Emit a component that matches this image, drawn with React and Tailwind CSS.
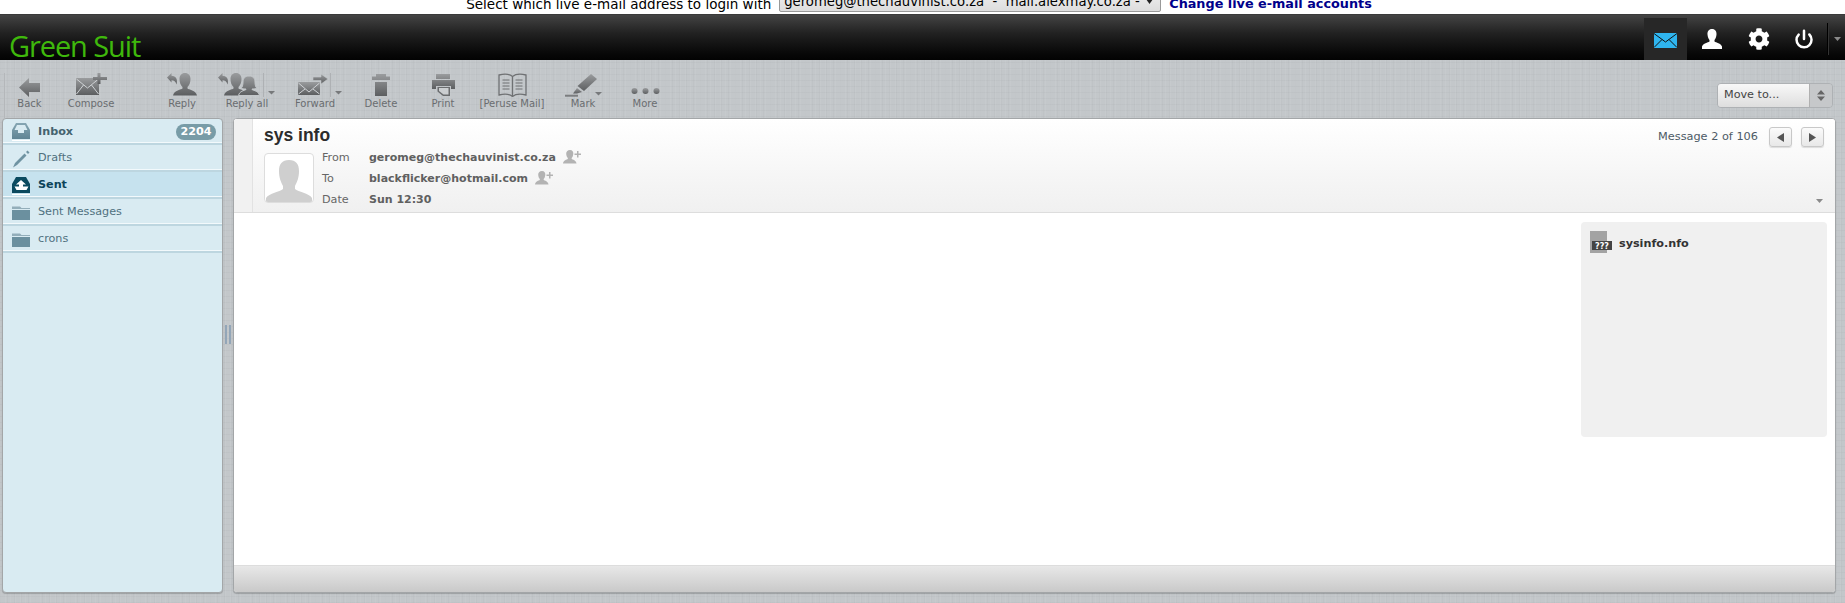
import { FaCog } from "react-icons/fa";
import { Power } from "lucide-react";

const linen =
  "bg-[#c3c7ca] bg-[image:repeating-linear-gradient(90deg,rgba(255,255,255,.05)_0_1px,transparent_1px_5px),repeating-linear-gradient(90deg,rgba(0,0,0,.018)_0_1px,transparent_1px_7px),repeating-linear-gradient(0deg,rgba(0,0,0,.022)_0_1px,transparent_1px_6px)]";

// toolbar icons share a grey top-to-bottom gradient
const Tb = ({ id, w, h = 24, className = "", children }) => (
  <svg width={w} height={h} viewBox={`0 0 ${w} ${h}`} className={className}>
    <defs>
      <linearGradient id={id} x1="0" y1="0" x2="0" y2="1">
        <stop offset="0" stopColor="#9a9c9e" />
        <stop offset="1" stopColor="#5c5e60" />
      </linearGradient>
    </defs>
    <g fill={`url(#${id})`}>{children}</g>
  </svg>
);

const Caret = ({ x, y }) => <path d={`M${x} ${y}h7l-3.500 3.500z`} fill="#77797b" />;

const bust = (cx) =>
  `M${cx} 0c3.400 0 5.500 2.500 5.500 6 0 3.500-1.200 6.500-3 8v1.500c1 1.200 8.500 1.500 9.500 7H${cx - 12}c1-5.500 8.500-5.800 9.500-7V14c-1.800-1.500-3-4.500-3-8 0-3.500 2.100-6 5.500-6z`;

const bob = (cx) =>
  `M${cx} 3c4 0 6 2.500 6 6 0 3.500.8 5 1.700 6-1.500 1-3.500 1-4.700 1v.5c2 1.200 6.500 1.500 7.500 6H${cx - 10.500}c1-4.500 5.500-4.800 7.500-6V16c-1.200 0-3.200 0-4.700-1 .9-1 1.700-2.500 1.700-6 0-3.500 2-6 6-6z`;

const replyArrow = "M0 4.500L4.500 0v2.800c4.500 0 6.500 3.500 5 8.700-.8-3-2.500-4.200-5-4.200V9.500z";

const Env = ({ x = 0, y = 5, w = 23, h = 17 }) => (
  <>
    <rect x={x} y={y} width={w} height={h} />
    <path
      d={`M${x + 0.5} ${y + 1}L${x + w / 2} ${y + 10}L${x + w - 0.5} ${y + 1}M${x + 0.5} ${y + h - 1}L${x + w / 2 - 4} ${y + 7}M${x + w - 0.5} ${y + h - 1}L${x + w / 2 + 4} ${y + 7}`}
      fill="none"
      stroke="#cfd2d5"
      strokeWidth="1"
    />
  </>
);

const toolbarItems = [
  {
    label: "Back",
    w: "w-[50px] border-l border-[#b4b7ba]",
    icon: (
      <Tb id="i-back" w={21}>
        <path d="M0 14.500L10 5v5h11v9H10v5z" />
      </Tb>
    ),
  },
  {
    label: "Compose",
    w: "w-[74px] mr-[32px]",
    icon: (
      <Tb id="i-compose" w={31}>
        <Env />
        <path d="M21.500 0h3v4h6.500v3h-6.500v4h-3V7H17V4h4.500z" />
      </Tb>
    ),
  },
  {
    label: "Reply",
    w: "w-[44px]",
    icon: (
      <Tb id="i-reply" w={31}>
        <path d={bust(18)} />
        <path d={replyArrow} />
      </Tb>
    ),
  },
  {
    label: "Reply all",
    w: "w-[86px]",
    icon: (
      <Tb id="i-replyall" w={58}>
        <path d={bust(18)} />
        <path d={bob(31)} stroke="#c3c7ca" strokeWidth="1" />
        <path d={replyArrow} />
        <rect x="45" y="0" width="1" height="25" fill="#aeb1b4" />
        <Caret x={50} y={18} />
      </Tb>
    ),
  },
  {
    label: "Forward",
    w: "w-[50px]",
    icon: (
      <Tb id="i-forward" w={44} className="ml-[10px]">
        <Env y={9} w={22} h={13} />
        <path d="M15 4h8V1l7 5-7 5V7.500h-8z" stroke="#c3c7ca" strokeWidth=".6" />
        <rect x="32" y="0" width="1" height="25" fill="#aeb1b4" />
        <Caret x={37} y={18} />
      </Tb>
    ),
  },
  {
    label: "Delete",
    w: "w-[82px]",
    icon: (
      <Tb id="i-delete" w={18}>
        <path d="M4 1h10v2.500h4V7H0V3.500h4zM3 9h12v14H3z" />
      </Tb>
    ),
  },
  {
    label: "Print",
    w: "w-[42px]",
    icon: (
      <Tb id="i-print" w={23}>
        <path d="M4 1h14v5H4zM0 7h23v9h-4v-3H4v3H0z" />
        <path d="M5.500 14H18v9H11l-5.500-4.500z" fill="#6a6c6e" />
        <path d="M7 15h9.500v6.500h-5L7 18z" fill="#cbced0" />
      </Tb>
    ),
  },
  {
    label: "[Peruse Mail]",
    w: "w-[96px]",
    icon: (
      <Tb id="i-peruse" w={29}>
        <g fill="none" stroke="#6f7173" strokeWidth="1.300">
          <path d="M14.500 3.500C11.500 1 6 .8 1 2v20c5-1.200 10.500-1 13.500 1.500 3-2.500 8.500-2.700 13.500-1.500V2C23 .8 17.500 1 14.500 3.500zM14.500 3.500v20" />
          <path d="M4.500 7h7M4.500 10h7M4.500 13h7M4.500 16h7M17.500 7h7M17.500 10h7M17.500 13h7M17.500 16h7" strokeWidth="1" />
        </g>
      </Tb>
    ),
  },
  {
    label: "Mark",
    w: "w-[46px]",
    icon: (
      <Tb id="i-mark" w={37}>
        <path d="M26 1l6 5-13 12-6.500-5z" />
        <path d="M12 15l5 4-5 1.500H8z" />
        <rect x="0" y="21.500" width="13" height="2" />
        <Caret x={30} y={19} />
      </Tb>
    ),
  },
  {
    label: "More",
    w: "w-[78px]",
    icon: (
      <Tb id="i-more" w={29}>
        <circle cx="3.500" cy="18" r="3" />
        <circle cx="14.500" cy="18" r="3" />
        <circle cx="25.500" cy="18" r="3" />
      </Tb>
    ),
  },
];

const InboxIcon = ({ dark, up }) => (
  <svg width="18" height="18" viewBox="0 0 18 18">
    <defs>
      <linearGradient id={up ? "f-up" : "f-in"} x1="0" y1="0" x2="0" y2="1">
        <stop offset="0" stopColor={dark ? "#0b4a5f" : "#86a6b3"} />
        <stop offset="1" stopColor={dark ? "#0b4a5f" : "#5f8494"} />
      </linearGradient>
    </defs>
    <path d="M4 0h10l4 7v9H0V7z" fill={`url(#${up ? "f-up" : "f-in"})`} />
    <rect y="17" width="18" height="1" fill="#fff" />
    {up ? (
      <path d="M9 3l5 4.500h-3v2h5.500l-2 3.500H4.500l-2-3.500H7v-2H4z" fill="#fff" />
    ) : (
      <path d="M5 2h8l2.500 5H12v3H6V7H2.500z" fill="#d9ebf2" />
    )}
  </svg>
);

const PencilIcon = () => (
  <svg width="18" height="18" viewBox="0 0 18 18">
    <path d="M12.500 3.500l2 2L5 15l-4 2.500L3 13zM14 2l1.500-1.500L17.500 2.500 16 4z" fill="#6f93a2" />
  </svg>
);

const FolderIcon = () => (
  <svg width="18" height="15" viewBox="0 0 18 15">
    <path d="M0 1.500h8l1.500 1.500H18v1H0z" fill="#93aeba" />
    <path d="M0 5h18v10H0z" fill="#6b909f" />
  </svg>
);

const folders = [
  { name: "Inbox", icon: <InboxIcon />, bold: true, badge: "2204", text: "text-[#44636f]" },
  { name: "Drafts", icon: <PencilIcon />, text: "text-[#50717f]" },
  { name: "Sent", icon: <InboxIcon dark up />, bold: true, active: true, text: "text-[#0c4459]" },
  { name: "Sent Messages", icon: <FolderIcon />, text: "text-[#50717f]" },
  { name: "crons", icon: <FolderIcon />, text: "text-[#50717f]" },
];

const PersonPlus = () => (
  <svg width="18" height="14" viewBox="0 0 18 14">
    <path d="M7 0c2.500 0 3.500 2 3.300 4-.2 2-.8 3.200-1.600 4v1c1 .8 4.300 1 4.800 4.500H0C.5 10 3.800 9.800 4.800 9V8C4 7.200 3.400 6 3.200 4 3 2 4.500 0 7 0z" fill="#b3b3b3" />
    <path d="M14 1h1.500v2.500H18V5h-2.500v2.500H14V5h-2.500V3.500H14z" fill="#b3b3b3" />
  </svg>
);

const PagerBtn = ({ dir }) => (
  <div className="w-[23px] h-[20px] flex items-center justify-center rounded-[3px] border border-[#c8c8c8] bg-gradient-to-b from-[#fbfbfb] to-[#e8e8e8] shadow-[0_1px_1px_rgba(0,0,0,.12)]">
    <svg width="7" height="9" viewBox="0 0 7 9">
      <path d={dir === "left" ? "M7 0v9L0 4.500z" : "M0 0v9l7-4.500z"} fill="#555" />
    </svg>
  </div>
);

const Row = ({ label, children, h }) => (
  <div className={`flex items-center ${h}`}>
    <span className="w-[47px] text-[11.2px] text-[#666]">{label}</span>
    {children}
  </div>
);

export default function App() {
  return (
    <div className={`h-screen flex flex-col overflow-hidden font-['DejaVu_Sans',sans-serif] ${linen}`}>
      {/* live account picker, cut off by the top of the window */}
      <div className="h-[14px] bg-white overflow-hidden flex items-end justify-center pr-[7px] text-black shrink-0">
        <div className="flex items-end gap-[8px] mb-[2px]">
          <span className="text-[13.5px] leading-[16px]">Select which live e-mail address to login with</span>
          <div className="w-[382px] h-[21px] flex items-center justify-between px-[4px] text-[13.2px] border border-[#999] rounded-[2px] bg-gradient-to-b from-[#eee] to-[#ddd] whitespace-nowrap">
            <span>geromeg@thechauvinist.co.za&nbsp;&nbsp;-&nbsp;&nbsp;mail.alexmay.co.za&nbsp;-</span>
            <svg width="7" height="5" viewBox="0 0 7 5" className="mr-[3px]">
              <path d="M0 0h7L3.500 5z" fill="#222" />
            </svg>
          </div>
          <span className="text-[12.8px] font-bold text-[#00008b] leading-[16px]">Change live e-mail accounts</span>
        </div>
      </div>

      {/* header */}
      <div className="h-[46px] shrink-0 flex justify-between bg-gradient-to-b from-[#444] via-[#222] via-40% to-[#030303] border-t border-[#3a3a3a]">
        <div className="pl-[9px] pt-[15px] text-[29px] leading-[32px] text-[#3fb80c] font-['Open_Sans',sans-serif] tracking-[-1.1px]">
          Green Suit
        </div>
        <div className="flex pt-[3px]">
          <div className="w-[43px] bg-[#272727] flex items-center justify-center pt-[3px]">
            <svg width="23" height="15" viewBox="0 0 23 15">
              <path d="M0 0h23v15H0z" fill="#2fb5ef" />
              <path d="M0 .500L11.500 9 23 .500M0 14.500L8 6.500M23 14.500L15 6.500" fill="none" stroke="#111" strokeWidth="1" />
            </svg>
          </div>
          <div className="w-[50px] flex items-center justify-center">
            <svg width="20" height="20" viewBox="0 0 20 20">
              <path d="M10 0c3.300 0 4.800 2.500 4.500 5.500-.2 2.500-1 4.300-2 5.500v1.500c1.500 1 6.500 2 7.500 5v2.500H0V17.500c1-3 6-4 7.500-5V11c-1-1.200-1.800-3-2-5.500C5.200 2.500 6.700 0 10 0z" fill="#fff" />
            </svg>
          </div>
          <div className="w-[44px] flex items-center justify-center">
            <FaCog size={22} className="text-white" />
          </div>
          <div className="w-[46px] flex items-center justify-center">
            <Power size={20} strokeWidth={3} className="text-white" />
          </div>
          <div className="my-[5px] w-[2px] bg-[#000] border-r border-[#333]" />
          <div className="w-[16px] flex items-center justify-center">
            <svg width="7" height="4" viewBox="0 0 7 4">
              <path d="M0 0h7L3.500 4z" fill="#8a8a8a" />
            </svg>
          </div>
        </div>
      </div>

      {/* toolbar */}
      <div className="h-[58px] shrink-0 flex justify-between pl-[4px] pr-[12px]">
        <div className="flex pt-[13px]">
          {toolbarItems.map((item) => (
            <div key={item.label} className={`flex flex-col items-center ${item.w}`}>
              {item.icon}
              <span className="mt-[1px] text-[10px] leading-[12px] text-[#6a6d70] whitespace-nowrap">{item.label}</span>
            </div>
          ))}
        </div>
        <div className="mt-[23px] w-[116px] h-[25px] flex rounded-[4px] border border-[#aeb1b4] overflow-hidden">
          <div className="flex-1 flex items-center pl-[6px] text-[11.2px] text-[#444] bg-gradient-to-b from-[#f8f8f8] to-[#dedede]">
            Move to...
          </div>
          <div className="w-[23px] flex items-center justify-center bg-[#c6c8ca] border-l border-[#b0b0b0]">
            <svg width="8" height="11" viewBox="0 0 8 11">
              <path d="M4 0l4 4.500H0zM4 11L0 6.500h8z" fill="#666" />
            </svg>
          </div>
        </div>
      </div>

      {/* panels */}
      <div className="flex-1 flex min-h-0 pl-[2px] pr-[9px] pb-[10px]">
        <div className="w-[221px] shrink-0 rounded-[4px] border border-[#a3a6a8] bg-[#d9ebf2] overflow-hidden shadow-[0_1px_1px_rgba(0,0,0,.2)]">
          {folders.map((f) => (
            <div
              key={f.name}
              className={`h-[27px] first:h-[26px] flex items-center pt-[2px] pl-[9px] pr-[6px] border-b-2 border-b-[#bdd6e0] shadow-[inset_0_-1px_0_#f2f9fc] ${f.active ? "bg-[#c6e2ee]" : ""}`}
            >
              <div className="w-[18px] flex justify-center">{f.icon}</div>
              <span className={`ml-[8px] flex-1 text-[11.2px] ${f.bold ? "font-bold" : ""} ${f.text}`}>{f.name}</span>
              {f.badge && (
                <span className="w-[40px] h-[16px] leading-[16px] rounded-full bg-[#789ca7] text-center text-[11.2px] font-bold text-white">
                  {f.badge}
                </span>
              )}
            </div>
          ))}
        </div>

        <div className="w-[10px] shrink-0 flex items-center justify-center gap-[2px] pb-[42px]">
          <div className="w-[2px] h-[19px] bg-[#93a6b8]" />
          <div className="w-[2px] h-[19px] bg-[#93a6b8]" />
        </div>

        <div className="flex-1 min-w-0 flex flex-col rounded-[4px] overflow-hidden border border-[#a3a6a8] bg-white shadow-[0_1px_1px_rgba(0,0,0,.2)]">
          <div className="h-[94px] shrink-0 flex border-b border-[#ddd] bg-gradient-to-b from-white to-[#f0f0f0]">
            <div className="w-[19px] shrink-0 border-r border-[#e2e2e2] bg-[#f1f1f1]" />
            <div className="flex-1 pl-[11px] pt-[6px]">
              <h2 className="text-[17.5px] leading-[20px] font-bold text-[#2c2c2c] font-['Liberation_Sans',sans-serif]">sys info</h2>
              <div className="flex mt-[8px]">
                <div className="w-[50px] h-[50px] rounded-[4px] border border-[#ddd] bg-white flex items-end justify-center overflow-hidden">
                  <svg width="46" height="42" viewBox="0 0 46 42">
                    <path d="M23 0c7 0 10 4 10 11 0 7-2 11-4 15v3c3 3 14 4 17 9v4H0v-4c3-5 14-6 17-9v-3c-2-4-4-8-4-15C13 4 16 0 23 0z" fill="#cfcfcf" />
                  </svg>
                </div>
                <div className="ml-[8px] mt-[-5px]">
                  <Row label="From" h="h-[21px]">
                    <span className="text-[11px] font-bold text-[#606060]">geromeg@thechauvinist.co.za</span>
                    <span className="ml-[7px] mt-[-3px]"><PersonPlus /></span>
                  </Row>
                  <Row label="To" h="h-[21px]">
                    <span className="text-[11px] font-bold text-[#606060]">blackflicker@hotmail.com</span>
                    <span className="ml-[7px] mt-[-3px]"><PersonPlus /></span>
                  </Row>
                  <Row label="Date" h="h-[20px]">
                    <span className="text-[11px] font-bold text-[#606060]">Sun 12:30</span>
                  </Row>
                </div>
              </div>
            </div>
            <div className="flex flex-col justify-between items-end pt-[8px] pb-[9px] pr-[11px]">
              <div className="flex items-center">
                <span className="text-[11.3px] text-[#4d5a66] mr-[11px] mt-[1px]">Message 2 of 106</span>
                <PagerBtn dir="left" />
                <span className="w-[9px]" />
                <PagerBtn dir="right" />
              </div>
              <svg width="7" height="4" viewBox="0 0 7 4" className="mr-[1px]">
                <path d="M0 0h7L3.500 4z" fill="#8a8a8a" />
              </svg>
            </div>
          </div>

          <div className="flex-1 flex justify-end pt-[9px] pr-[8px]">
            <div className="w-[246px] h-[215px] rounded-[4px] bg-[#f0f0f0] pl-[9px] pt-[9px] flex items-start">
              <svg width="22" height="22" viewBox="0 0 22 22">
                <rect width="17" height="22" fill="#a3a3a3" />
                <rect x="2" y="10" width="20" height="9" fill="#444" />
                <text x="12" y="17.500" textAnchor="middle" fontSize="8" fontWeight="700" fill="#fff" fontFamily="DejaVu Sans">???</text>
              </svg>
              <span className="ml-[7px] mt-[6px] text-[11.2px] leading-[14px] font-bold text-[#333]">sysinfo.nfo</span>
            </div>
          </div>

          <div className="h-[27px] shrink-0 border-t border-[#ddd] bg-gradient-to-b from-[#e8e8e8] to-[#c9c9c9]" />
        </div>
      </div>
    </div>
  );
}
